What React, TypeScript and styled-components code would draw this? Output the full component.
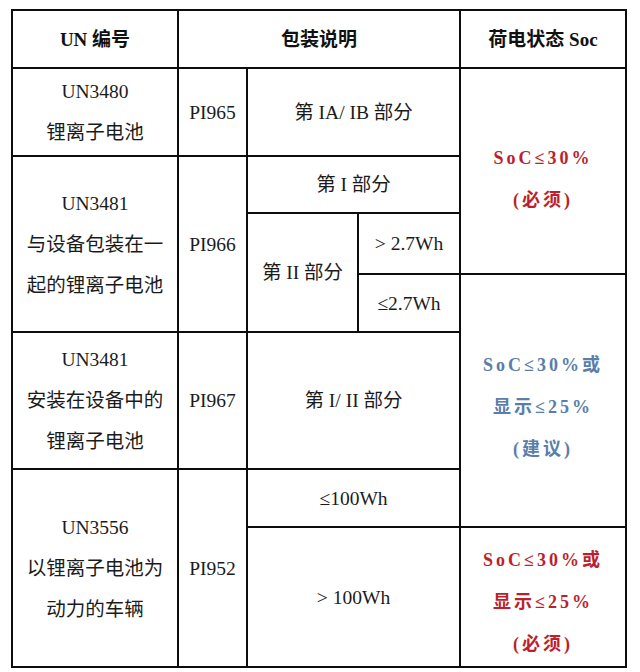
import React from "react";
import styled, { createGlobalStyle } from "styled-components";

const Global = createGlobalStyle`
  html, body { margin: 0; padding: 0; background: #ffffff; }
  body { font-family: "Liberation Serif", "Noto Sans CJK SC", serif; color: #1b1b1b; }
`;

const Page = styled.div`
  padding: 9px 0 0 11px;
  width: 640px;
  height: 672px;
  box-sizing: border-box;
  overflow: hidden;
`;

const Table = styled.div`
  display: grid;
  grid-template-columns: 164px 67px 109px 100px 164px;
  grid-template-rows: 56px 86px 55px 59px 56px 135px 56px 138px;
  gap: 2px;
  padding: 2px;
  background: #0d0d0d;
  width: max-content;
`;

type Area = { col: string; row: string };

const Cell = styled.div<{ $col: string; $row: string }>`
  grid-column: ${(p) => p.$col};
  grid-row: ${(p) => p.$row};
  background: #ffffff;
  display: flex;
  flex-direction: column;
  align-items: center;
  justify-content: center;
  text-align: center;
  font-family: "Liberation Serif", "Noto Sans CJK SC", serif;
  font-size: 19.5px;
  line-height: 41px;
  color: #1b1b1b;
`;

const HeadCell = styled(Cell)`
  font-weight: 700;
  font-size: 19px;
  color: #111;
`;

const Line = styled.span`
  display: block;
  white-space: nowrap;
`;

const SocText = styled.div<{ $tone: "red" | "blue" }>`
  display: flex;
  flex-direction: column;
  align-items: center;
  font-family: "Liberation Serif", "Noto Sans CJK SC", serif;
  font-weight: 700;
  font-size: 18px;
  letter-spacing: 3px;
  line-height: 42px;
  color: ${(p) => (p.$tone === "red" ? "#bd1f2d" : "#5a7daa")};
`;

const SocCell = styled(Cell)<{ $shift?: number }>`
  padding-top: ${(p) => p.$shift ?? 0}px;
  box-sizing: border-box;
`;

const T: React.FC<Area & { lines: string[] }> = ({ col, row, lines }) => (
  <Cell $col={col} $row={row}>
    {lines.map((l) => (
      <Line key={l}>{l}</Line>
    ))}
  </Cell>
);

export default function App() {
  return (
    <>
      <Global />
      <Page>
        <Table>
          <HeadCell $col="1" $row="1">UN 编号</HeadCell>
          <HeadCell $col="2 / 5" $row="1">包装说明</HeadCell>
          <HeadCell $col="5" $row="1">荷电状态 Soc</HeadCell>

          <T col="1" row="2" lines={["UN3480", "锂离子电池"]} />
          <T col="2" row="2" lines={["PI965"]} />
          <T col="3 / 5" row="2" lines={["第 IA/ IB 部分"]} />
          <SocCell $col="5" $row="2 / 5" $shift={16}>
            <SocText $tone="red">
              <Line>SoC≤30%</Line>
              <Line>(必须)</Line>
            </SocText>
          </SocCell>

          <T col="1" row="3 / 6" lines={["UN3481", "与设备包装在一", "起的锂离子电池"]} />
          <T col="2" row="3 / 6" lines={["PI966"]} />
          <T col="3 / 5" row="3" lines={["第 I 部分"]} />
          <T col="3" row="4 / 6" lines={["第 II 部分"]} />
          <T col="4" row="4" lines={["> 2.7Wh"]} />
          <T col="4" row="5" lines={["≤2.7Wh"]} />

          <SocCell $col="5" $row="5 / 8" $shift={12}>
            <SocText $tone="blue">
              <Line>SoC≤30%或</Line>
              <Line>显示≤25%</Line>
              <Line>(建议)</Line>
            </SocText>
          </SocCell>

          <T col="1" row="6" lines={["UN3481", "安装在设备中的", "锂离子电池"]} />
          <T col="2" row="6" lines={["PI967"]} />
          <T col="3 / 5" row="6" lines={["第 I/ II 部分"]} />

          <T col="1" row="7 / 9" lines={["UN3556", "以锂离子电池为", "动力的车辆"]} />
          <T col="2" row="7 / 9" lines={["PI952"]} />
          <T col="3 / 5" row="7" lines={["≤100Wh"]} />
          <T col="3 / 5" row="8" lines={["> 100Wh"]} />

          <SocCell $col="5" $row="8" $shift={10}>
            <SocText $tone="red">
              <Line>SoC≤30%或</Line>
              <Line>显示≤25%</Line>
              <Line>(必须)</Line>
            </SocText>
          </SocCell>
        </Table>
      </Page>
    </>
  );
}
